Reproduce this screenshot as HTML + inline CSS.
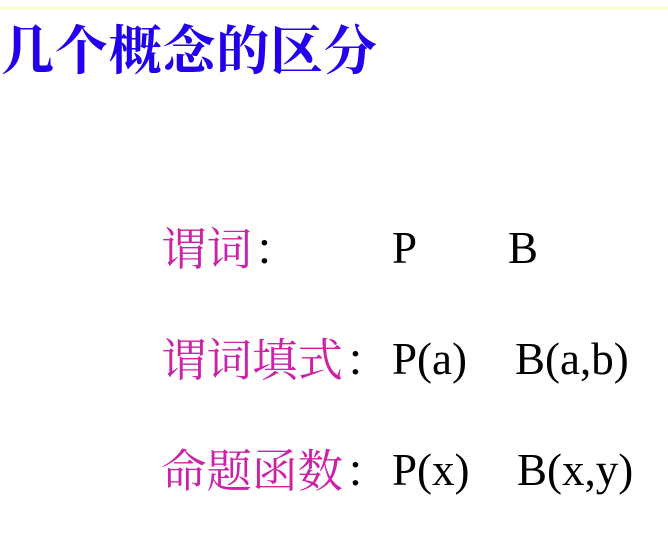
<!DOCTYPE html>
<html><head><meta charset="utf-8"><style>
html,body{margin:0;padding:0;background:#fff;width:668px;height:538px;overflow:hidden;position:relative}
.line{position:absolute;left:0;top:7px;width:668px;height:2px;background:#ffffc0}
.t{position:absolute;left:1px;top:25px;font-family:"Liberation Sans","Noto Serif CJK SC","Noto Sans CJK SC",serif;font-weight:bold;font-size:53px;line-height:53px;color:#2200ee;letter-spacing:0.8px;white-space:nowrap}
.r{position:absolute;font-family:"Liberation Serif","Noto Serif CJK SC",serif;font-size:45px;line-height:45px;white-space:nowrap;color:#000}
.m{color:#cc22aa;font-size:45.5px;position:relative;left:-2px}
</style></head><body>
<div class="line"></div>
<div class="t">几个概念的区分</div>

<div class="r" style="left:163px;top:227px"><span class="m">谓词</span>：</div>
<div class="r" style="left:392px;top:226px">P</div>
<div class="r" style="left:508px;top:226px">B</div>

<div class="r" style="left:163px;top:338px"><span class="m">谓词填式</span>：</div>
<div class="r" style="left:392px;top:337px">P(a)</div>
<div class="r" style="left:515px;top:337px">B(a,b)</div>

<div class="r" style="left:163px;top:449px"><span class="m">命题函数</span>：</div>
<div class="r" style="left:392px;top:448px">P(x)</div>
<div class="r" style="left:517px;top:448px">B(x,y)</div>
</body></html>
